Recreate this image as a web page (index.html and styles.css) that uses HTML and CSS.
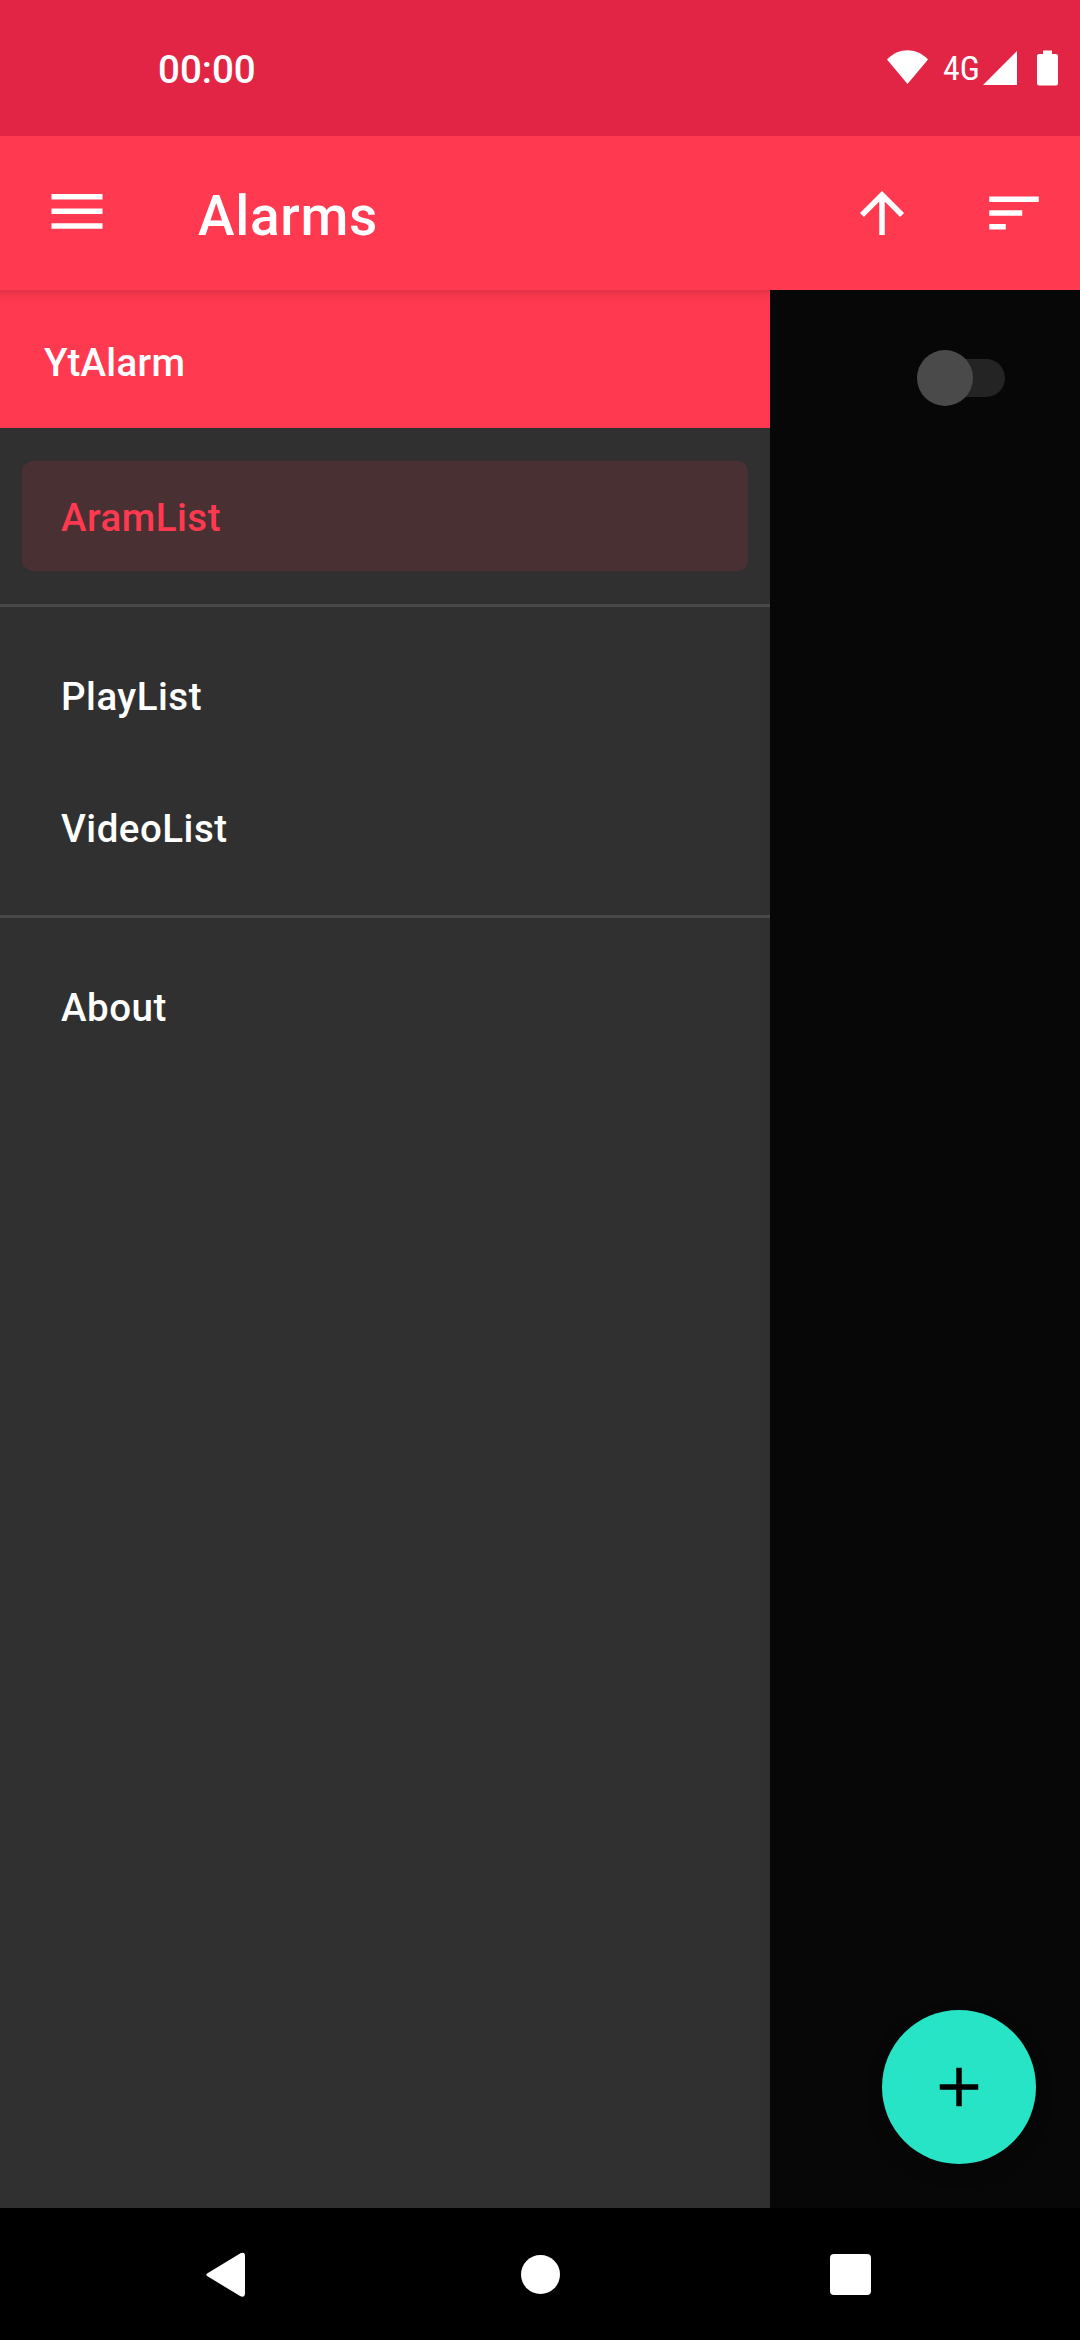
FILE: index.html
```html
<!DOCTYPE html>
<html lang="en">
<head>
<meta charset="utf-8">
<title>Alarms</title>
<link rel="stylesheet" href="styles.css">
</head>
<body>
<div class="screen">
  <div class="status-bar">
    <span class="clock">00:00</span>
    <svg class="wifi" width="41" height="34" viewBox="0 0 41 34"><path d="M0 9.500C12-2.700 29-2.700 41 9.500L20.500 34Z"/></svg>
    <span class="network">4G</span>
    <svg class="signal" width="34" height="34" viewBox="0 0 34 34"><path d="M0 34L34 0V34Z"/></svg>
    <svg class="battery" width="21" height="36" viewBox="0 0 21 36"><path d="M6 0.500H15V4H19Q21 4 21 6V33.500Q21 35.500 19 35.500H2Q0 35.500 0 33.500V6Q0 4 2 4H6Z"/></svg>
  </div>
  <header class="app-bar">
    <svg class="menu-icon" width="52" height="36" viewBox="0 0 52 36"><path d="M0.500 0H51.500V5.600H0.500ZM0.500 14.500H51.500V20H0.500ZM0.500 29.200H51.500V34.800H0.500Z"/></svg>
    <h1 class="title">Alarms</h1>
    <svg class="up-icon" width="66" height="66" viewBox="0 0 24 24"><path d="M4 12l1.410 1.410L11 7.830V20h2V7.830l5.580 5.590L20 12l-8-8-8 8z"/></svg>
    <svg class="sort-icon" width="66" height="66" viewBox="0 0 24 24"><path d="M3 18h6v-2H3v2zM3 6v2h18V6H3zm0 7h12v-2H3v2z"/></svg>
  </header>
  <main class="content">
    <nav class="drawer">
      <div class="drawer-header">YtAlarm</div>
      <div class="group"><a class="item selected">AramList</a></div>
      <div class="group"><a class="item">PlayList</a><a class="item">VideoList</a></div>
      <div class="group"><a class="item">About</a></div>
    </nav>
    <section class="alarms">
      <div class="switch"><span class="thumb"></span><span class="track"></span></div>
      <button class="fab" aria-label="Add alarm"><svg width="66" height="66" viewBox="0 0 24 24"><path d="M19 13h-6v6h-2v-6H5v-2h6V5h2v6h6v2z"/></svg></button>
    </section>
  </main>
  <footer class="nav-bar">
    <svg class="back" width="40" height="46" viewBox="0 0 40 46"><path d="M1.500 21.200L34.500 1.200Q39 -0.500 39 4V41Q39 46 34.500 44.300L1.500 24.300Q-1 22.700 1.500 21.200Z"/></svg>
    <span class="home"></span>
    <span class="recents"></span>
  </footer>
</div>
</body>
</html>
```
FILE: styles.css
```css
* { box-sizing: border-box; }
body {
  margin: 0;
  background: #000;
  color: #fff;
  font-family: Roboto, "Noto Sans", sans-serif;
}
svg { display: block; flex: none; fill: #fff; }
.screen {
  display: flex;
  flex-direction: column;
  width: 1080px;
  height: 2340px;
  overflow: hidden;
}
.status-bar {
  display: flex;
  height: 136px;
  padding: 0 22px 0 158px;
  background: #e22544;
}
.clock {
  margin: 47px auto 0 0;
  font-size: 38.5px;
  font-weight: 500;
  line-height: 46px;
}
.wifi { margin: 50px 15px 0 0; }
.network {
  width: 38px;
  margin: 45px 2px 0 0;
  font-family: "Roboto Condensed", Roboto, sans-serif;
  font-stretch: 75%;
  font-size: 34px;
  line-height: 46px;
}
.signal { margin: 51px 20px 0 0; }
.battery { margin-top: 50px; }
.app-bar {
  display: flex;
  height: 154px;
  padding: 0 33px 0 51px;
  background: #ff394f;
}
.menu-icon { margin: 58px 95px 0 0; }
.title {
  margin: 48px auto 0 0;
  font-size: 55px;
  font-weight: 500;
  line-height: 64px;
  letter-spacing: 0.7px;
}
.up-icon { margin: 44px 66px 0 0; }
.sort-icon { margin: 44px 0 0; }
.content { display: flex; flex: 1; }
.drawer { width: 770px; background: #303030; }
.drawer-header {
  height: 138px;
  padding: 50px 44px 0;
  background: linear-gradient(#e23347 0, #f4374c 5px, #ff394f 13px);
  font-size: 38.5px;
  font-weight: 500;
  line-height: 46px;
  letter-spacing: 0.3px;
}
.group {
  display: flex;
  flex-direction: column;
  gap: 22px;
  padding: 33px 22px;
}
.group + .group { border-top: 3px solid #494949; }
.item {
  height: 110px;
  padding: 34px 39px 0;
  border-radius: 11px;
  font-size: 38.5px;
  font-weight: 500;
  line-height: 46px;
  letter-spacing: 0.5px;
}
.selected { background: #493032; color: #ff394f; }
.alarms {
  display: flex;
  flex: 1;
  flex-direction: column;
  align-items: flex-end;
  justify-content: space-between;
  padding: 60px 44px 44px 0;
  background: #070707;
}
.switch {
  display: flex;
  align-items: center;
  margin-right: 31px;
}
.thumb {
  z-index: 1;
  width: 56px;
  height: 56px;
  border-radius: 50%;
  background: #4a4a4a;
}
.track {
  width: 60px;
  height: 38px;
  margin-left: -28px;
  border-radius: 19px;
  background: #242424;
}
.fab {
  display: grid;
  place-items: center;
  width: 154px;
  height: 154px;
  padding: 0;
  border: 0;
  border-radius: 50%;
  background: #26e4c5;
  box-shadow: 0 8px 14px #050505;
}
.fab svg { fill: #000; }
.nav-bar {
  display: flex;
  height: 132px;
  padding-left: 206px;
  background: #000;
}
.back { margin: 44px 275px 0 0; }
.home {
  width: 39px;
  height: 39px;
  margin: 47px 270px 0 0;
  border-radius: 50%;
  background: #fff;
}
.recents {
  width: 41px;
  height: 41px;
  margin-top: 46px;
  border-radius: 4px;
  background: #fff;
}
```
